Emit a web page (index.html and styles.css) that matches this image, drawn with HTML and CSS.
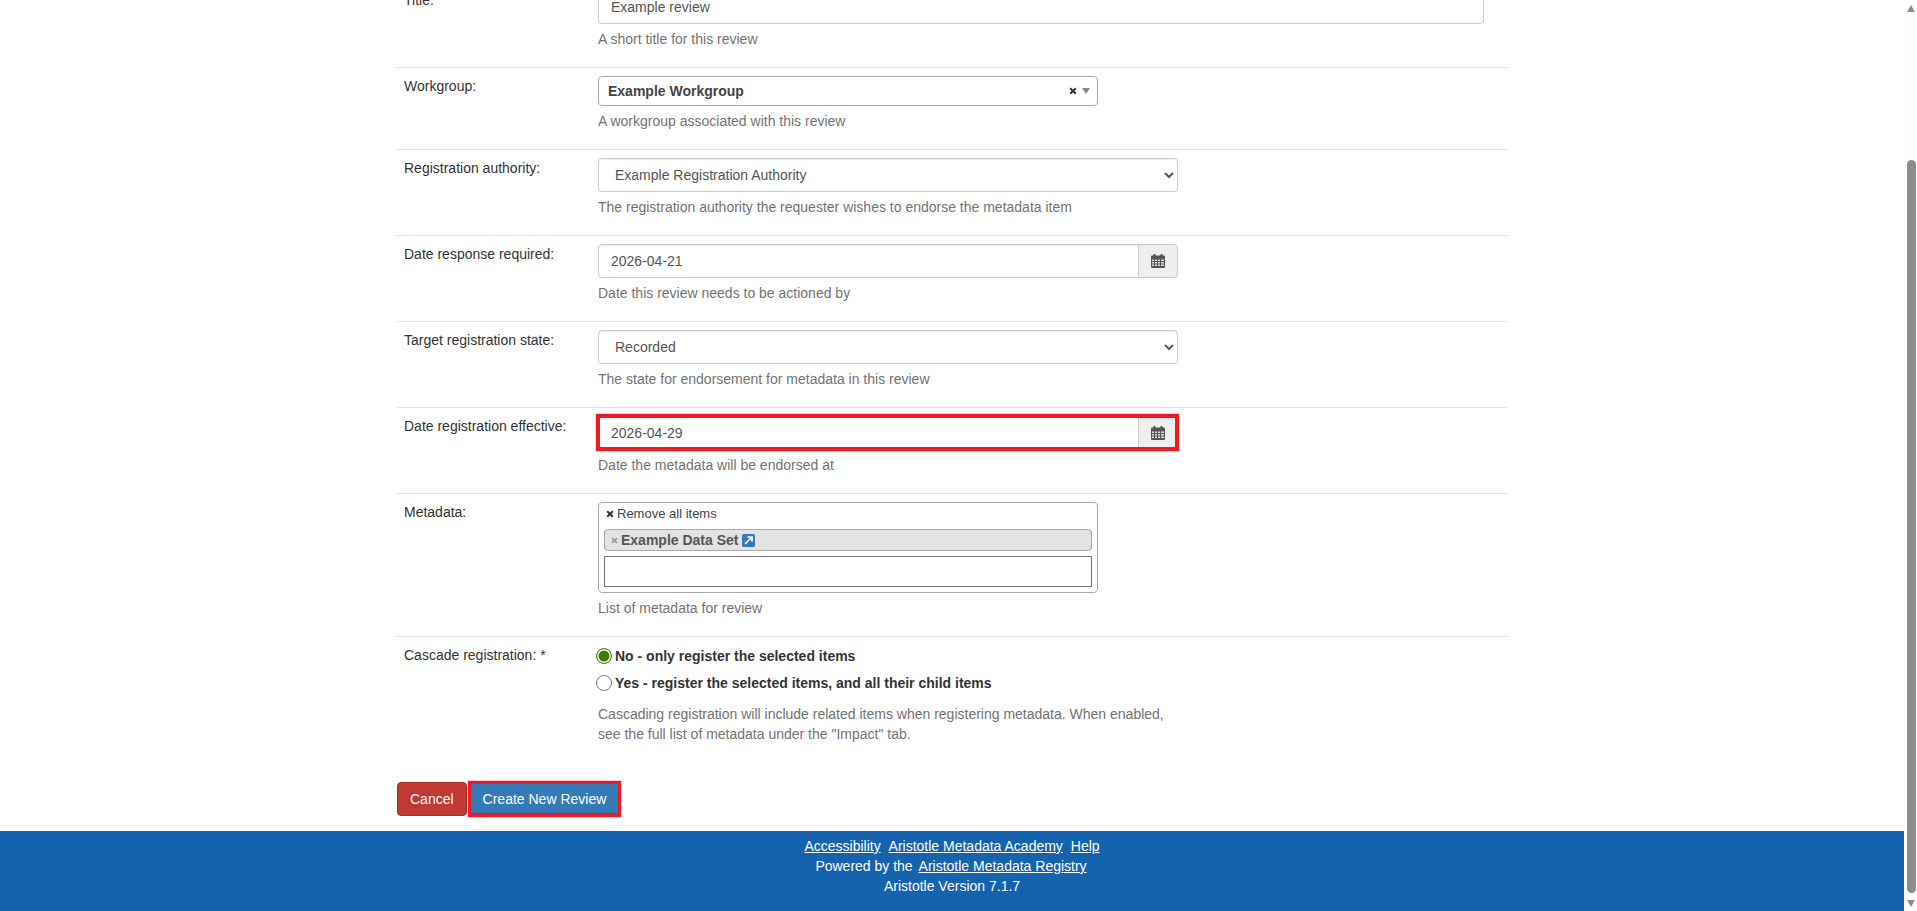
FILE: index.html
```html
<!DOCTYPE html>
<html lang="en">
<head>
<meta charset="utf-8">
<title>Create New Review</title>
<link rel="stylesheet" href="styles.css">
</head>
<body>
<svg class="defs" width="0" height="0" aria-hidden="true">
  <symbol id="cal" viewBox="0 0 14 14">
    <rect x="2.5" y="0" width="2" height="3" fill="#555"/>
    <rect x="9.5" y="0" width="2" height="3" fill="#555"/>
    <rect x="0" y="1.5" width="14" height="12.5" rx="1" fill="#555"/>
    <g fill="#dcdcdc">
      <rect x="1" y="5.5" width="2" height="1.5"/><rect x="4" y="5.5" width="2" height="1.5"/><rect x="7" y="5.5" width="2" height="1.5"/><rect x="10" y="5.5" width="3" height="1.5"/>
      <rect x="1" y="8" width="2" height="1.5"/><rect x="4" y="8" width="2" height="1.5"/><rect x="7" y="8" width="2" height="1.5"/><rect x="10" y="8" width="3" height="1.5"/>
      <rect x="1" y="10.5" width="2" height="1.5"/><rect x="4" y="10.5" width="2" height="1.5"/><rect x="7" y="10.5" width="2" height="1.5"/><rect x="10" y="10.5" width="3" height="1.5"/>
    </g>
  </symbol>
  <symbol id="times" viewBox="0 0 8 8">
    <path d="M1.2 1.2 6.8 6.8M6.8 1.2 1.2 6.8" stroke="currentColor" stroke-width="2" fill="none"/>
  </symbol>
</svg>
<div class="window">
  <div class="page">
    <main class="container">
      <form class="form">
        <div class="row">
          <label class="row-label">Title:</label>
          <div class="row-field wide">
            <input class="control" type="text" value="Example review">
            <p class="help">A short title for this review</p>
          </div>
        </div>
        <div class="row">
          <label class="row-label">Workgroup:</label>
          <div class="row-field">
            <div class="selectize">
              <span class="selectize-value">Example Workgroup</span>
              <svg class="selectize-clear"><use href="#times"/></svg>
              <span class="selectize-caret"></span>
            </div>
            <p class="help">A workgroup associated with this review</p>
          </div>
        </div>
        <div class="row">
          <label class="row-label">Registration authority:</label>
          <div class="row-field">
            <select class="control medium"><option>Example Registration Authority</option></select>
            <p class="help">The registration authority the requester wishes to endorse the metadata item</p>
          </div>
        </div>
        <div class="row">
          <label class="row-label">Date response required:</label>
          <div class="row-field">
            <div class="date-group">
              <input class="control date-input" type="text" value="2026-04-21">
              <span class="date-addon"><svg class="cal-icon"><use href="#cal"/></svg></span>
            </div>
            <p class="help">Date this review needs to be actioned by</p>
          </div>
        </div>
        <div class="row">
          <label class="row-label">Target registration state:</label>
          <div class="row-field">
            <select class="control medium"><option>Recorded</option></select>
            <p class="help">The state for endorsement for metadata in this review</p>
          </div>
        </div>
        <div class="row">
          <label class="row-label">Date registration effective:</label>
          <div class="row-field">
            <div class="date-group">
              <input class="control date-input" type="text" value="2026-04-29">
              <span class="date-addon"><svg class="cal-icon"><use href="#cal"/></svg></span>
              <span class="mark mark-date"></span>
            </div>
            <p class="help">Date the metadata will be endorsed at</p>
          </div>
        </div>
        <div class="row">
          <label class="row-label">Metadata:</label>
          <div class="row-field">
            <div class="multi">
              <div class="multi-remove"><svg class="multi-x"><use href="#times"/></svg>Remove all items</div>
              <div class="chip">
                <svg class="chip-x"><use href="#times"/></svg>
                <span class="chip-text">Example Data Set</span>
                <svg class="chip-link" viewBox="0 0 13 13">
                  <rect width="13" height="13" rx="1.5" fill="#337ab7"/>
                  <path d="M3 10 9 4M5.5 3H10V7.5" stroke="#fff" stroke-width="1.7" fill="none"/>
                </svg>
              </div>
              <div class="multi-input"></div>
            </div>
            <p class="help">List of metadata for review</p>
          </div>
        </div>
        <div class="row">
          <label class="row-label">Cascade registration: *</label>
          <div class="row-field">
            <div class="radio"><span class="radio-dot on"></span><span>No - only register the selected items</span></div>
            <div class="radio"><span class="radio-dot"></span><span>Yes - register the selected items, and all their child items</span></div>
            <p class="help help-cascade">Cascading registration will include related items when registering metadata. When enabled, see the full list of metadata under the "Impact" tab.</p>
          </div>
        </div>
        <div class="actions">
          <button class="btn btn-cancel" type="button">Cancel</button>
          <div class="btn-wrap">
            <button class="btn btn-create" type="button">Create New Review</button>
            <span class="mark mark-btn"></span>
          </div>
        </div>
      </form>
    </main>
    <footer class="footer">
      <div><a href="#">Accessibility</a> <a href="#">Aristotle Metadata Academy</a> <a href="#">Help</a></div>
      <div>Powered by the <a href="#">Aristotle Metadata Registry</a></div>
      <div>Aristotle Version 7.1.7</div>
    </footer>
  </div>
  <aside class="scrollbar" aria-hidden="true">
    <span class="arrow arrow-up"></span>
    <span class="thumb"></span>
    <span class="arrow arrow-down"></span>
  </aside>
</div>
</body>
</html>
```
FILE: styles.css
```css
* { box-sizing: border-box; }
html, body { margin: 0; height: 100%; overflow: hidden; }
body {
  font-family: "Liberation Sans", Arial, sans-serif;
  font-size: 14px;
  line-height: 20px;
  color: #333;
  background: #fff;
}
.defs { position: absolute; }
.window { display: flex; height: 911px; }
.page { flex: 1; min-width: 0; display: flex; flex-direction: column; overflow: hidden; }
.container { width: 1110px; margin: -18px auto 0; flex: 1; }
.form { display: flex; flex-direction: column; }

.row {
  display: grid;
  grid-template-columns: 201px 1fr;
  padding: 8px 0 18px;
  border-bottom: 1px solid #e3e3e3;
}
.row:nth-last-child(2) { border-bottom: 0; padding-bottom: 38px; }
.row-label { padding-left: 7px; }
.row-field { min-width: 0; }
.row-field.wide { padding-right: 23px; }
.help { margin: 5px 0 0; color: #737373; }
.help-cascade { margin-top: 10px; width: 580px; }

.control {
  display: block;
  width: 100%;
  height: 34px;
  padding: 6px 12px;
  font: inherit;
  color: #555;
  background: #fff;
  border: 1px solid #ccc;
  border-radius: 4px;
  box-shadow: inset 0 1px 1px rgba(0,0,0,.075);
  outline: 0;
}
.medium { width: 580px; }

.selectize {
  display: flex;
  align-items: center;
  width: 500px;
  height: 30px;
  padding: 0 7px 0 9px;
  background: #fff;
  border: 1px solid #aaa;
  border-radius: 4px;
}
.selectize-value { flex: 1; font-weight: 700; color: #444; }
.selectize-clear { width: 8px; height: 8px; color: #333; }
.selectize-caret {
  width: 0; height: 0;
  margin-left: 5px;
  border-left: 4px solid transparent;
  border-right: 4px solid transparent;
  border-top: 6px solid #888;
}

.date-group { position: relative; display: flex; width: 580px; height: 34px; }
.date-input { flex: 1; min-width: 0; border-radius: 4px 0 0 4px; }
.date-addon {
  display: flex;
  align-items: center;
  justify-content: center;
  width: 40px;
  margin-left: -1px;
  background: #eee;
  border: 1px solid #ccc;
  border-radius: 0 4px 4px 0;
}
.cal-icon { width: 14px; height: 14px; }

.mark { position: absolute; border: 4px solid #ed1c24; box-shadow: 0 0 0 1px rgba(237,28,36,.2); }
.mark-date { left: -2px; right: -1px; top: -2px; bottom: -1px; }
.mark-btn { left: -2px; right: -2px; top: -1px; bottom: -1px; border-width: 3px 3px 4px; }

.multi {
  width: 500px;
  height: 91px;
  padding: 1px 5px 5px;
  border: 1px solid #aaa;
  border-radius: 4px;
}
.multi-remove { display: flex; align-items: center; gap: 3px; height: 20px; padding-left: 2px; font-size: 13px; color: #444; }
.multi-x { width: 8px; height: 8px; color: #333; }
.chip {
  display: flex;
  align-items: center;
  height: 22px;
  margin-top: 5px;
  padding-left: 6px;
  background: #e3e3e3;
  border: 1px solid #aaa;
  border-radius: 4px;
}
.chip-x { width: 7px; height: 7px; margin-right: 3px; color: #999; }
.chip-text { font-weight: 700; color: #555; }
.chip-link { width: 13px; height: 13px; margin-left: 3px; }
.multi-input { height: 31px; margin-top: 5px; background: #fff; border: 1px solid #767676; }

.radio { display: flex; align-items: center; gap: 3px; height: 22px; margin-bottom: 5px; margin-left: -2px; font-weight: 700; }
.radio + .radio { margin-bottom: 0; }
.radio-dot {
  width: 16px; height: 16px;
  flex: none;
  background: #fff;
  border: 1.5px solid #808080;
  border-radius: 50%;
}
.radio-dot.on { border: 1.5px solid #4a8a14; box-shadow: inset 0 0 0 1.5px #fff; background: #3d7a0a; }

.actions { display: flex; gap: 3px; }
.btn {
  height: 34px;
  padding: 6px 12px;
  font: inherit;
  color: #fff;
  border: 1px solid transparent;
  border-radius: 4px;
}
.btn-cancel { background: #c03935; border-color: #ac2925; }
.btn-create { background: #337ab7; border-color: #2e6da4; }
.btn-wrap { position: relative; display: flex; }

.footer {
  height: 80px;
  padding-top: 5px;
  text-align: center;
  color: #fff;
  background: #1562ae;
  flex: none;
}
.footer a { margin: 0 2px; color: #fff; text-decoration: underline; }

.scrollbar {
  flex: none;
  width: 13px;
  display: flex;
  flex-direction: column;
  align-items: flex-start;
  padding: 5px 1px 0 3px;
  background: #fdfdfd;
}
.arrow { width: 0; height: 0; border-left: 4.5px solid transparent; border-right: 4.5px solid transparent; }
.arrow-up { border-bottom: 7px solid #8c8c8c; }
.arrow-down { border-top: 7px solid #8c8c8c; }
.thumb { width: 9px; height: 733px; margin: 148px 0 7px; background: #8c8c8c; border-radius: 5px; }
```
